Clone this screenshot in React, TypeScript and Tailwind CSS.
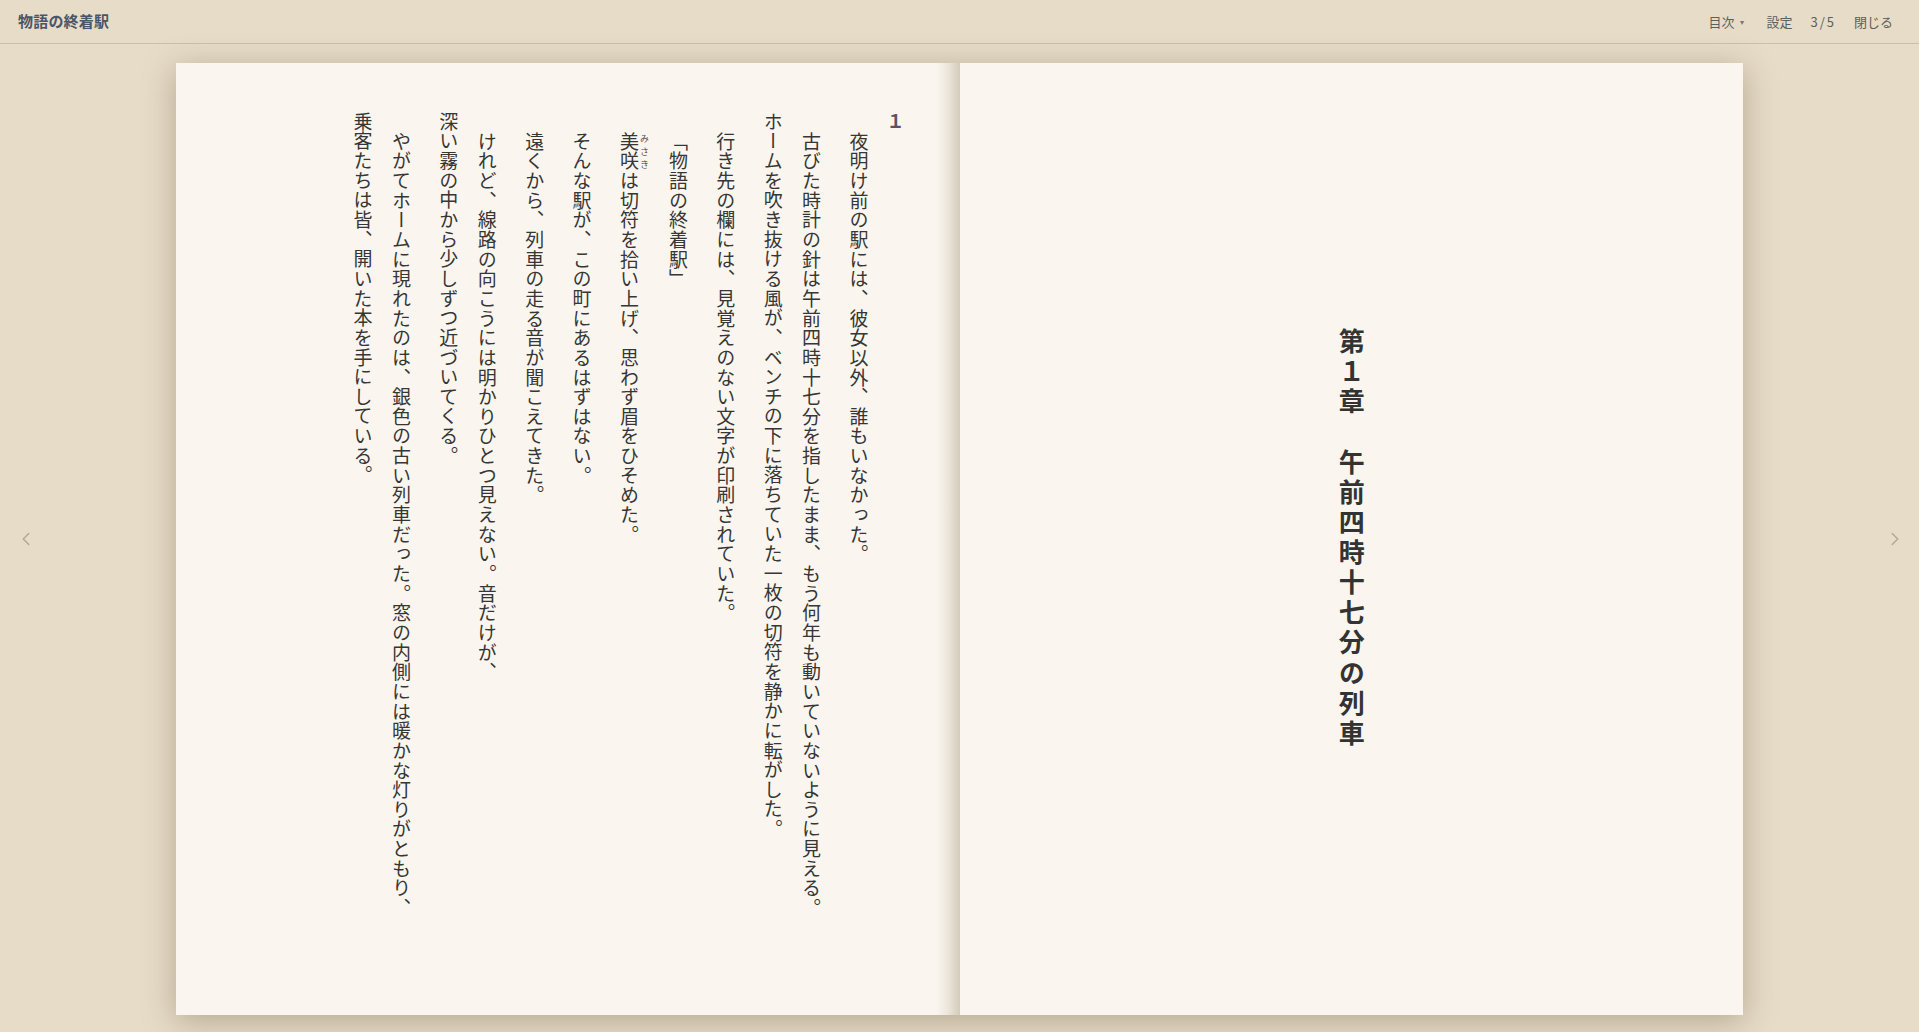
import { ChevronLeft, ChevronRight } from "lucide-react"

const font = "font-['Noto_Sans_CJK_JP','Noto_Sans',sans-serif]"

function Header() {
  return (
    <header className="h-[44px] shrink-0 flex items-center justify-between pl-[18px] pr-[26px] border-b border-[#cbbfa9]">
      <h1 className="text-[15px] font-bold text-[#4a5568] tracking-[0.2px]">物語の終着駅</h1>
      <nav className="flex items-center gap-[18px] text-[13px] text-[#5e5e5e]">
        <button className="flex items-center gap-[6px] pr-[4px]">
          <span>目次</span>
          <span className="text-[8px] text-[#777]">▾</span>
        </button>
        <button>設定</button>
        <span className="tracking-[2px]">3/5</span>
        <button>閉じる</button>
      </nav>
    </header>
  )
}

function Para({ children }: { children: React.ReactNode }) {
  return (
    <p className="indent-[20px] ml-[9px] text-[19px] tracking-[0.65px] leading-[38.4px] text-[#363636]">
      {children}
    </p>
  )
}

function LeftPage() {
  return (
    <div className="relative w-1/2 shrink-0 bg-[#faf6ef] flex justify-end pt-[49px] pr-[46px]">
      <div className="[writing-mode:vertical-rl] h-[815px]">
        <h2 className="text-[18px] leading-[36px] font-bold text-[#5b5363]">１</h2>
        <Para>夜明け前の駅には、彼女以外、誰もいなかった。</Para>
        <Para>
          古びた時計の針は午前四時十七分を指したまま、もう何年も動いていないように見える。ホームを吹き抜ける風が、ベンチの下に落ちていた一枚の切符を静かに転がした。
        </Para>
        <Para>行き先の欄には、見覚えのない文字が印刷されていた。</Para>
        <Para>「物語の終着駅」</Para>
        <Para>
          <ruby>
            美咲<rt className="text-[9px] tracking-normal text-[#555]">みさき</rt>
          </ruby>
          は切符を拾い上げ、思わず眉をひそめた。
        </Para>
        <Para>そんな駅が、この町にあるはずはない。</Para>
        <Para>遠くから、列車の走る音が聞こえてきた。</Para>
        <Para>
          けれど、線路の向こうには明かりひとつ見えない。音だけが、
          <br />
          深い霧の中から少しずつ近づいてくる。
        </Para>
        <Para>
          やがてホームに現れたのは、銀色の古い列車だった。窓の内側には暖かな灯りがともり、乗客たちは皆、開いた本を手にしている。
        </Para>
      </div>
      {/* spine shading */}
      <div className="absolute top-0 right-0 h-full w-[24px] bg-linear-to-r from-[#faf6ef]/0 via-[#ece6da] to-[#d3cbbb]" />
    </div>
  )
}

function RightPage() {
  return (
    <div className="w-1/2 shrink-0 bg-[#faf6ef] flex items-center justify-center">
      <h2 className="[writing-mode:vertical-rl] text-[26px] leading-[40px] tracking-[0.16em] font-bold text-[#333]">
        第１章　午前四時十七分の列車
      </h2>
    </div>
  )
}

export default function App() {
  return (
    <div className={`h-screen flex flex-col bg-[#e6dcc7] overflow-hidden ${font}`}>
      <Header />
      <main className="flex-1 grid grid-cols-[176px_1fr_176px] items-start pt-[19px]">
        <div className="h-[952px] flex items-center pl-[15px]">
          <ChevronLeft size={22} strokeWidth={1.5} className="text-[#b3a891]" />
        </div>
        <div className="h-[952px] flex shadow-[0_6px_30px_rgba(90,70,40,0.35)]">
          <LeftPage />
          <RightPage />
        </div>
        <div className="h-[952px] flex items-center justify-end pr-[13px]">
          <ChevronRight size={22} strokeWidth={1.5} className="text-[#b3a891]" />
        </div>
      </main>
    </div>
  )
}
